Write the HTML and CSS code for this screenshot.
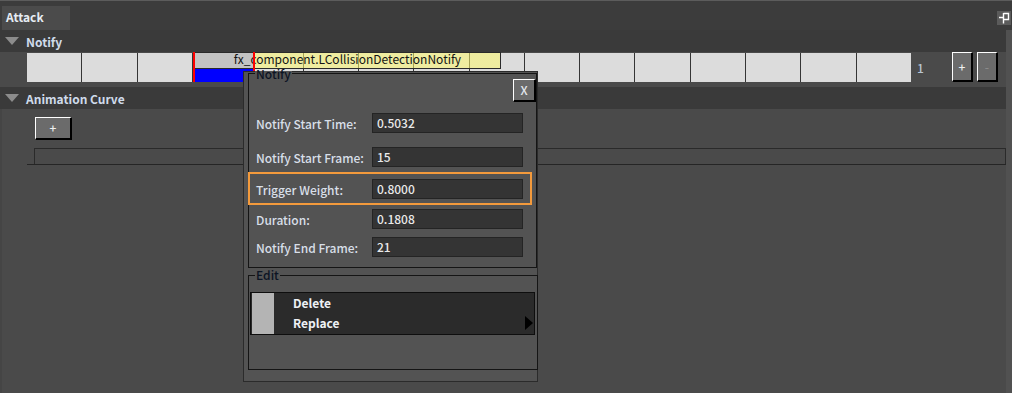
FILE: index.html
```html
<!DOCTYPE html>
<html lang="en">
<head>
    <meta charset="UTF-8">
    <meta name="viewport" content="width=device-width, initial-scale=1.0">
    <title>Attack - Notify Editor</title>
    <link rel="stylesheet" href="styles.css">
</head>
<body>
    <!-- Dock title bar -->
    <div class="dock-bar">
        <div class="dock-tab">Attack</div>
        <div class="dock-float">
            <svg width="14" height="14" viewBox="0 0 14 14">
                <path d="M2 6.5H6.5M6.5 2.5H11.5V8.5H6.5M6.5 2V12.5" fill="none" stroke="#ffffff" stroke-width="1.4"/>
            </svg>
        </div>
    </div>

    <div class="dock-body">
        <div class="panel">
            <!-- Notify track -->
            <div class="section-head"><span class="arrow"></span>Notify</div>
            <div class="timeline">
                <div class="track">
                    <div class="cell"></div><div class="cell"></div><div class="cell"></div><div class="cell"></div>
                    <div class="cell"></div><div class="cell"></div><div class="cell"></div><div class="cell"></div>
                    <div class="cell"></div><div class="cell"></div><div class="cell"></div><div class="cell"></div>
                    <div class="cell"></div><div class="cell"></div><div class="cell"></div><div class="cell"></div>
                    <div class="clip">
                        <div class="clip-label">fx_component.LCollisionDetectionNotify</div>
                        <div class="clip-bar"></div>
                    </div>
                </div>
                <span class="count">1</span>
                <button class="bevel step">+</button>
                <button class="bevel step off">-</button>
            </div>

            <!-- Animation curve -->
            <div class="section-head"><span class="arrow"></span>Animation Curve</div>
            <div class="curve-body">
                <button class="bevel add">+</button>
                <div class="curve-frame"><div class="curve-box"></div></div>
            </div>
        </div>
        <div class="scroll-strip"></div>
    </div>

    <!-- Notify popup -->
    <div class="popup">
        <div class="group notify-group">
            <span class="group-title">Notify</span>
            <div class="close-row"><button class="bevel close">X</button></div>

            <div class="field f1">
                <span class="label">Notify Start Time:</span>
                <span class="value">0.5032</span>
            </div>
            <div class="field f2">
                <span class="label">Notify Start Frame:</span>
                <span class="value">15</span>
            </div>
            <div class="field f3 highlight">
                <span class="label">Trigger Weight:</span>
                <span class="value">0.8000</span>
            </div>
            <div class="field f4">
                <span class="label">Duration:</span>
                <span class="value">0.1808</span>
            </div>
            <div class="field f5">
                <span class="label">Notify End Frame:</span>
                <span class="value">21</span>
            </div>
        </div>

        <div class="group edit-group">
            <span class="group-title">Edit</span>
            <div class="menu">
                <div class="menu-strip"></div>
                <div class="menu-items">
                    <div class="menu-item">Delete</div>
                    <div class="menu-item">Replace</div>
                </div>
                <span class="submenu-arrow"></span>
            </div>
        </div>
    </div>
</body>
</html>
```

FILE: styles.css
```css
/* General Styling */
body {
    margin: 0;
    width: 1012px;
    height: 393px;
    overflow: hidden;
    position: relative;
    background-color: #4a4a4a;
    font-family: "Noto Sans CJK SC", "Noto Sans", sans-serif;
    font-size: 12px;
    font-weight: 500;
    color: #d8dfe8;
}

/* Dock title bar */
.dock-bar {
    height: 29px;
    border-top: 1px solid #5c5c5c;
    background-color: #3c3c3c;
    display: flex;
    align-items: flex-end;
    justify-content: space-between;
    padding: 0 1px 0 2px;
}

.dock-tab {
    width: 64px;
    height: 24px;
    padding-left: 4px;
    line-height: 22px;
    background-color: #4b4b4b;
    font-weight: bold;
    color: #e6ecf3;
}

.dock-float {
    width: 14px;
    height: 14px;
    margin-bottom: 5px;
    background-color: #5b5b5b;
}

.dock-float svg {
    display: block;
}

.dock-body {
    display: flex;
    height: 363px;
}

.panel {
    flex: 1;
    display: flex;
    flex-direction: column;
}

.scroll-strip {
    width: 6px;
    background-color: #515151;
}

/* Section headers */
.section-head {
    height: 22px;
    flex-shrink: 0;
    display: flex;
    align-items: center;
    background-color: #3a3a3a;
    font-weight: bold;
    color: #cfdbea;
}

.arrow {
    width: 0;
    height: 0;
    margin: 0 7px 0 5px;
    border-left: 7.5px solid transparent;
    border-right: 7.5px solid transparent;
    border-top: 8px solid #8c8c8c;
}

/* Timeline row */
.timeline {
    height: 30px;
    flex-shrink: 0;
    display: flex;
    padding-left: 27px;
    margin-bottom: 5px;
}

.track {
    position: relative;
    width: 884px;
    height: 29px;
    margin-top: 1px;
    display: grid;
    grid-template-columns: repeat(16, 1fr);
    gap: 1px;
    background-color: #353535;
}

.cell {
    background-color: #dcdcdc;
}

.clip {
    position: absolute;
    left: 166px;
    top: -1px;
    width: 308px;
    height: 30px;
    box-sizing: border-box;
    padding-left: 2px;
}

.clip::before,
.clip::after {
    content: "";
    position: absolute;
    top: 0;
    width: 2px;
    height: 30px;
    background-color: #ff0000;
}

.clip::before {
    left: 0;
}

.clip::after {
    left: 60px;
}

.clip-label {
    height: 17px;
    box-sizing: border-box;
    border: 1px solid #2a2a2a;
    border-left: none;
    background: linear-gradient(to right, #c3c3c3 58px, rgba(255, 250, 110, 0.55) 58px);
    color: #141414;
    font-weight: normal;
    line-height: 12px;
    text-align: center;
    white-space: nowrap;
}

.clip-bar {
    width: 58px;
    height: 13px;
    background-color: #0000ff;
}

.count {
    width: 35px;
    padding-left: 6px;
    align-self: center;
    color: #b9c6d3;
}

/* Bevelled Qt style buttons */
.bevel {
    box-sizing: border-box;
    padding: 0;
    border-style: solid;
    border-width: 1px 2px 2px 1px;
    border-color: #ffffff #000000 #000000 #ffffff;
    background-color: #6b6b6b;
    color: #f0f0f0;
    font-family: inherit;
    font-size: 12px;
    font-weight: 500;
    line-height: 1;
}

.step {
    width: 21px;
    height: 30px;
    margin-right: 4px;
}

.step.off {
    color: #8a8a8a;
}

/* Animation curve body */
.curve-body {
    flex: 1;
    border-left: 2px solid #454545;
    padding-top: 8px;
}

.add {
    display: block;
    width: 37px;
    height: 23px;
    margin-left: 33px;
}

.curve-frame {
    margin: 8px 0 0 25px;
    padding-left: 7px;
    border-bottom: 1px solid #252525;
}

.curve-box {
    height: 16px;
    box-sizing: border-box;
    border: 1px solid #2a2a2a;
    border-bottom: none;
}

/* Notify popup */
.popup {
    position: absolute;
    left: 243px;
    top: 71px;
    width: 295px;
    height: 311px;
    box-sizing: border-box;
    padding: 1px 0 0 4px;
    border: 1px solid #2b2b2b;
    background-color: #535353;
}

.group {
    position: relative;
    box-sizing: border-box;
    border: 1px solid #151515;
}

.group-title {
    position: absolute;
    left: 6px;
    top: -3px;
    padding: 0 1px;
    line-height: 6px;
    background-color: #535353;
    color: #0c1424;
}

.notify-group {
    width: 289px;
    height: 195px;
}

.edit-group {
    width: 290px;
    height: 95px;
    margin-top: 7px;
}

.edit-group .group-title {
    top: -4px;
}

.close-row {
    display: flex;
    justify-content: flex-end;
    margin-top: 5px;
}

.close {
    width: 23px;
    height: 23px;
    color: #e4e8ee;
}

.field {
    display: flex;
    align-items: center;
    padding-left: 7px;
}

.label {
    width: 116px;
    white-space: nowrap;
}

.value {
    width: 151px;
    height: 20px;
    box-sizing: border-box;
    padding-left: 4px;
    border: 1px solid #242424;
    background-color: #343434;
    line-height: 18px;
    color: #eaeaea;
}

.f1 { margin-top: 11px; }
.f2 { margin-top: 14px; }
.f3 { margin-top: 5px; }
.f4 { margin-top: 4px; }
.f5 { margin-top: 8px; }

.highlight {
    width: 284px;
    box-sizing: border-box;
    margin-left: -1px;
    padding: 5px 0 4px 6px;
    border: 2px solid #f39a3c;
}

/* Context menu inside Edit group */
.menu {
    position: relative;
    display: flex;
    width: 285px;
    height: 43px;
    box-sizing: border-box;
    margin: 16px 0 0 1px;
    border: 1px solid #0e0e0e;
    background-color: #2b2b2b;
}

.menu-strip {
    width: 22px;
    margin-left: 1px;
    background-color: #b4b4b4;
}

.menu-items {
    padding-left: 19px;
}

.menu-item {
    line-height: 20px;
    font-weight: bold;
    color: #eef1f5;
}

.submenu-arrow {
    position: absolute;
    right: 1px;
    top: 23px;
    width: 0;
    height: 0;
    border-top: 7px solid transparent;
    border-bottom: 7px solid transparent;
    border-left: 8px solid #000000;
}
```
